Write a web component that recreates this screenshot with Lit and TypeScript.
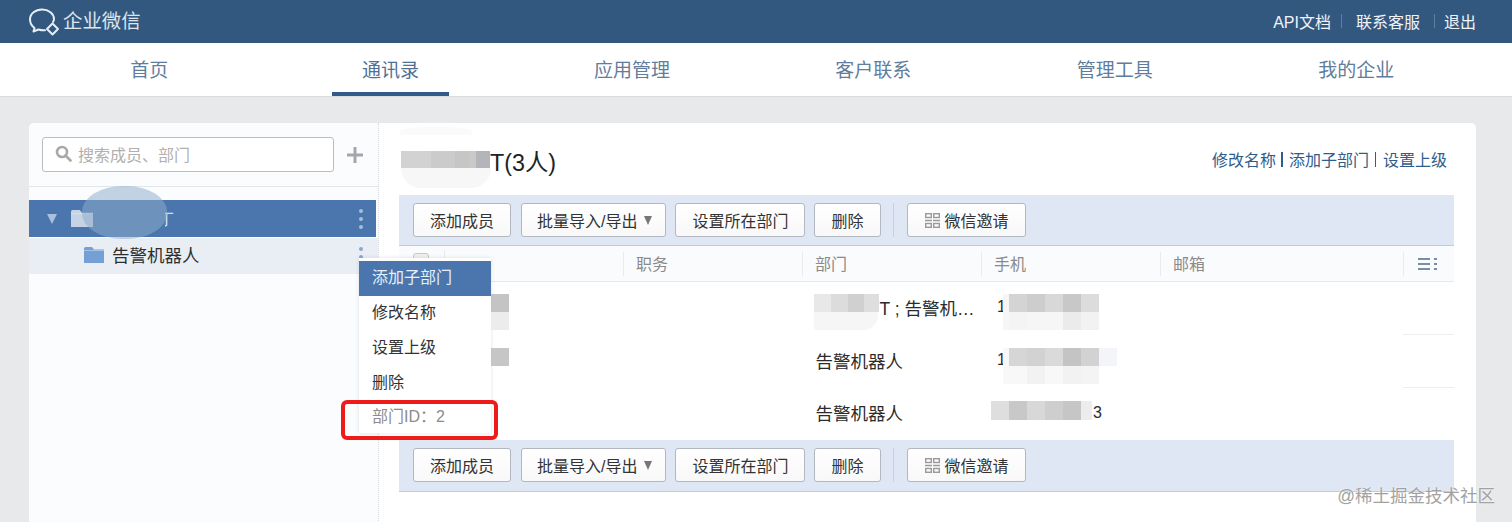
import { LitElement, html, css, svg } from "lit";
import { customElement } from "lit/decorators.js";

type Tile = [number, number, number, number, string, string?];

const NAV = ["首页", "通讯录", "应用管理", "客户联系", "管理工具", "我的企业"];
const COLS = ["职务", "部门", "手机", "邮箱"];
const MENU = ["添加子部门", "修改名称", "设置上级", "删除"];

// pixelated redactions, placed over the content they hide (page coordinates)
function strip(x: number, y: number, h: number, widths: number[], colours: string[]): Tile[] {
  const out: Tile[] = [];
  let cx = x;
  widths.forEach((w, i) => {
    out.push([cx, y, w, h, colours[i]]);
    cx += w;
  });
  return out;
}

const FIVE = [18, 18, 18, 18, 18];

const TILES: Tile[] = [
  [400, 127, 72, 8, "#fafafa", "50% 50% 0 0"],
  [401, 168, 90, 20, "#f7f7f7", "0 0 26px 26px"],
  ...strip(401, 151, 17, [30, 24, 14, 7, 14], ["#d2d2d2", "#cbcbcb", "#c6c6c6", "#c9c9c7", "#b4b5ba"]),
  [491, 294, 18, 18, "#c4c4c4"],
  [491, 312, 18, 18, "#ececec"],
  [491, 348, 18, 18, "#c6c6c6"],
  [814, 312, 64, 18, "#f6f6f6", "0 0 14px 0"],
  ...strip(814, 294, 18, [17, 17, 16, 15], ["#e8e8e8", "#dcdcdc", "#d0d0d0", "#dedede"]),
  [1003, 294, 6, 36, "#f6f6f6"],
  ...strip(1009, 294, 18, FIVE, ["#d4d4d4", "#cdcdcd", "#d8d8d8", "#c8c8c8", "#dcdcdc"]),
  ...strip(1009, 312, 18, FIVE, ["#f4f4f4", "#f6f6f6", "#f6f6f6", "#ebebeb", "#f2f2f2"]),
  [1003, 348, 6, 36, "#f8f8f8"],
  ...strip(1009, 348, 18, [...FIVE, 18], ["#d6d6d6", "#d2d2d2", "#dadada", "#c4c4c4", "#d2d2d2", "#f4f5f8"]),
  ...strip(1009, 366, 18, FIVE, ["#f8f8f8", "#f2f2f2", "#f8f8f8", "#f2f2f2", "#f4f4f4"]),
  ...strip(991, 401, 19, [18, 18, 18, 18, 18, 11], ["#dedede", "#c8c8c8", "#d8d8d8", "#cecece", "#c6c6c6", "#ececec"]),
];

@customElement("tb-bar")
class TbBar extends LitElement {
  static styles = css`
    :host {
      display: flex;
      align-items: center;
      height: 51px;
      box-sizing: border-box;
      padding: 0 14px;
      background: #dfe7f4;
      border-bottom: 1px solid #c3cbd8;
      gap: 9px;
    }
    .btn {
      height: 34px;
      box-sizing: border-box;
      padding: 0 16px;
      display: flex;
      align-items: center;
      font-size: 16px;
      color: #333;
      background: linear-gradient(#ffffff, #f8f8f8);
      border: 1px solid #b3b8c0;
      border-radius: 3px;
      white-space: nowrap;
    }
    .btn span {
      display: block;
      margin-top: -1px;
    }
    .batch {
      padding: 0 13px 0 15px;
      margin-left: 1px;
    }
    .caret {
      margin-left: 7px;
      width: 0;
      height: 0;
      border-left: 4px solid transparent;
      border-right: 4px solid transparent;
      border-top: 9px solid #777;
    }
    .sep {
      width: 1px;
      height: 34px;
      background: #c6d0de;
      margin: 0 4px 0 3px;
    }
    .qr {
      margin-right: 5px;
      display: block;
    }
    .invite {
      padding-left: 17px;
    }
  `;
  render() {
    return html`
      <div class="btn"><span>添加成员</span></div>
      <div class="btn batch"><span>批量导入/导出</span><i class="caret"></i></div>
      <div class="btn"><span>设置所在部门</span></div>
      <div class="btn"><span>删除</span></div>
      <div class="sep"></div>
      <div class="btn invite">
        <svg class="qr" width="15" height="15" viewBox="0 0 15 15" fill="none" stroke="#9a9a9a" stroke-width="1.4">
          <rect x="0.7" y="0.7" width="5.6" height="3.8"></rect>
          <rect x="8.700" y="0.7" width="5.6" height="3.8"></rect>
          <path d="M0 7.500 H7 M8 7.500 H15"></path>
          <rect x="0.7" y="10.500" width="5.6" height="3.8"></rect>
          <rect x="8.700" y="10.500" width="5.6" height="3.8"></rect>
        </svg>
        <span>微信邀请</span>
      </div>
    `;
  }
}

const folder = (w: number, h: number, fill: string) => svg`
  <svg width=${w} height=${h} viewBox="0 0 20 16" preserveAspectRatio="none" style="display:block">
    <path d="M0 1.500 Q0 0 1.500 0 H8 L10 2.500 H20 V16 H0 Z" fill=${fill}></path>
    <path d="M0 3.500 H20" stroke="#ffffff" stroke-opacity=".35" stroke-width="1"></path>
  </svg>`;

@customElement("app-root")
class AppRoot extends LitElement {
  static styles = css`
    :host {
      display: block;
      position: relative;
      height: 522px;
      overflow: hidden;
      background: #e8e9eb;
      font-family: "Liberation Sans", "Noto Sans CJK SC", sans-serif;
      color: #222;
    }
    .top {
      height: 43px;
      background: #33587f;
      display: flex;
      align-items: center;
      justify-content: space-between;
      padding: 0 36px 0 29px;
      color: #f0f4f8;
      box-sizing: border-box;
    }
    .logo {
      display: flex;
      align-items: center;
      gap: 3px;
      font-size: 19.400px;
      color: #dde5ee;
    }
    .logo svg {
      display: block;
    }
    .logo span {
      margin-top: -4px;
    }
    .toplinks {
      display: flex;
      align-items: center;
      font-size: 16px;
      margin-top: -1px;
    }
    .toplinks i {
      width: 1px;
      height: 14px;
      background: #5f7f9f;
    }
    .toplinks i.a {
      margin: 0 14px 0 10px;
    }
    .toplinks i.b {
      margin: 0 9px 0 14px;
    }
    .nav {
      height: 54px;
      box-sizing: border-box;
      background: #fff;
      border-bottom: 1px solid #dcdcdc;
      display: grid;
      grid-template-columns: repeat(6, 241.4px);
      padding-left: 28.500px;
    }
    .nav div {
      display: flex;
      justify-content: center;
    }
    .nav span {
      display: block;
      padding: 0 30px;
      height: 53px;
      box-sizing: border-box;
      line-height: 56px;
      font-size: 19px;
      color: #5f7d9c;
    }
    .nav span.on {
      color: #4f7196;
      border-bottom: 4px solid #2f5a8a;
    }
    .card {
      position: relative;
      margin: 26px 36px 0 29px;
      height: 420px;
      background: #fff;
      border-radius: 5px 5px 0 0;
      display: flex;
    }
    .side {
      width: 349px;
      flex: none;
      background: #fbfcfe;
      border-right: 1px dotted #d8dadd;
      border-radius: 5px 0 0 0;
    }
    .searchbar {
      height: 64px;
      box-sizing: border-box;
      border-bottom: 1px solid #e3e5e8;
      display: flex;
      align-items: center;
      padding: 0 13px;
      gap: 12px;
    }
    .search {
      width: 292px;
      height: 35px;
      box-sizing: border-box;
      background: #fff;
      border: 1px solid #b9bdc4;
      border-radius: 3px;
      display: flex;
      align-items: center;
      padding: 0 0 2px 12px;
      gap: 6px;
      font-size: 16px;
      color: #b0b0b0;
    }
    .search svg,
    .plus {
      display: block;
    }
    .tree {
      padding-top: 13px;
      padding-right: 2px;
    }
    .row {
      display: flex;
      align-items: center;
      height: 37px;
      position: relative;
    }
    .row.sel {
      background: #4a76ad;
      margin-bottom: 1px;
      padding-left: 18px;
      gap: 14px;
    }
    .row.sub {
      height: 36px;
      box-sizing: border-box;
      background: #e9eef5;
      padding: 0 0 3px 55px;
      gap: 8px;
      font-size: 17.500px;
      color: #2e2e2e;
      margin-right: -2px;
    }
    .sub span.name {
      margin-top: -1px;
    }
    .tri {
      width: 0;
      height: 0;
      border-left: 5px solid transparent;
      border-right: 5px solid transparent;
      border-top: 10px solid #a9c1dd;
    }
    .dots {
      position: absolute;
      right: 13px;
      top: 9px;
      display: grid;
      gap: 4px;
    }
    .sub .dots {
      right: 15px;
    }
    .dots b {
      display: block;
      width: 4px;
      height: 4px;
      border-radius: 50%;
      background: #a5bddb;
    }
    .sub .dots b {
      background: #8aa8cc;
    }
    .frag {
      position: absolute;
      left: 129px;
      top: 6px;
      color: #d5e0ec;
      font-size: 16px;
      clip-path: inset(0 0 0 7px);
    }
    .main {
      flex: 1;
      min-width: 0;
      padding: 0 22px 0 20px;
    }
    .head {
      height: 72px;
      display: flex;
      align-items: center;
      justify-content: space-between;
      padding-left: 91px;
      padding-right: 7px;
    }
    .title {
      font-size: 23.300px;
      color: #222;
      padding-top: 3px;
    }
    .links {
      font-size: 16px;
      color: #2f5d8c;
      display: flex;
      align-items: center;
      margin-top: 0;
    }
    .links i {
      width: 2px;
      height: 15px;
      background: #2f5d8c;
      margin: 0 5.500px;
    }
    .links i.thin {
      width: 1px;
      margin: 0 6.500px;
    }
    .thead,
    .tr {
      display: grid;
      grid-template-columns: 224px 179px 179px 179px 243px 51px;
    }
    .thead {
      height: 36px;
      box-sizing: border-box;
      background: #fafbfd;
      border-bottom: 1px solid #e6e9ee;
      font-size: 16px;
      color: #8a8a8a;
      align-items: center;
    }
    .th {
      height: 24px;
      line-height: 26px;
      padding-left: 12px;
      box-sizing: border-box;
      border-left: 1px solid #e9ebef;
      white-space: nowrap;
    }
    .th.first {
      border-left: none;
      padding-left: 14px;
      display: flex;
      align-items: flex-start;
      margin-top: -3px;
      height: 24px;
    }
    .check {
      width: 16px;
      height: 16px;
      box-sizing: border-box;
      border: 1px solid #c8c8c8;
      border-radius: 3px;
      background: #f0f0f0;
      margin-top: 3px;
    }
    .vline {
      width: 1px;
      height: 24px;
      background: #e9ebef;
      margin-left: 15px;
    }
    .th.tool {
      padding-left: 14px;
      display: flex;
      align-items: center;
    }
    .tr {
      height: 53px;
      font-size: 17.500px;
      color: #2b2b2b;
      align-items: center;
      white-space: nowrap;
    }
    .tr.last {
      height: 52px;
    }
    .td {
      min-width: 0;
      margin-top: -3px;
    }
    .td.dept {
      padding-left: 13.500px;
    }
    .td.phone {
      padding-left: 16px;
      font-size: 16px;
    }
    .td.end {
      align-self: stretch;
      box-sizing: border-box;
      margin-top: 0;
    }
    .td.end.line {
      border-bottom: 1px solid #eceef1;
    }
    tb-bar.bottom {
      height: 52px;
      padding-bottom: 1px;
    }
    .mask {
      position: absolute;
    }
    .blob {
      position: absolute;
      left: 82px;
      top: 186px;
      width: 85px;
      height: 53px;
      border-radius: 48%;
      background: rgba(141, 171, 202, 0.525);
    }
    .menu {
      position: absolute;
      left: 330px;
      top: 135px;
      width: 132px;
      background: #fff;
      padding-top: 3px;
      box-shadow: 0 0 4px rgba(0, 0, 0, 0.12);
      font-size: 16px;
      color: #333;
    }
    .menu div {
      height: 35px;
      line-height: 34px;
      padding-left: 13px;
    }
    .menu .on {
      background: #4a76ad;
      color: #e8eff7;
    }
    .menu .muted {
      color: #8c8c8c;
      height: 32px;
      line-height: 32px;
    }
    .red {
      position: absolute;
      left: 341px;
      top: 400px;
      width: 157px;
      height: 40px;
      box-sizing: border-box;
      border: 4px solid #ee1b1b;
      border-radius: 6px;
    }
    .mark {
      position: absolute;
      right: 17px;
      bottom: 15px;
      font-size: 17.500px;
      color: #a2a2a2;
      text-shadow: 0 0 2px #fff;
      white-space: nowrap;
    }
  `;

  render() {
    return html`
      <div class="top">
        <div class="logo">
          <svg width="31" height="28" viewBox="0 0 31 28" fill="none" stroke="#e6edf4" stroke-width="2" stroke-linecap="round" stroke-linejoin="round">
            <path d="M24 14 C25 12.500 25 12 25 11 C25 5.500 19.500 1.500 13 1.500 C6.500 1.500 1 5.500 1 11.500 C1 15 3 18 5.500 20 L4.500 23.500 L9.500 21.500 C11.500 22.200 14 22.500 16 22.300"></path>
            <path d="M23.500 15.500 L29 21 L23.500 26.500 L18 21 Z"></path>
          </svg>
          <span>企业微信</span>
        </div>
        <div class="toplinks">
          <span>API文档</span><i class="a"></i><span>联系客服</span><i class="b"></i><span>退出</span>
        </div>
      </div>
      <div class="nav">
        ${NAV.map((n, i) => html`<div><span class=${i === 1 ? "on" : ""}>${n}</span></div>`)}
      </div>
      <div class="card">
        <div class="side">
          <div class="searchbar">
            <div class="search">
              <svg width="17" height="17" viewBox="0 0 17 17" fill="none" stroke="#a8a8a8" stroke-width="2.600">
                <circle cx="7" cy="7" r="5"></circle>
                <path d="M10.500 10.500 L15.500 15.500" stroke-linecap="round"></path>
              </svg>
              <span>搜索成员、部门</span>
            </div>
            <svg class="plus" width="18" height="18" viewBox="0 0 18 18" stroke="#a3a6ab" stroke-width="3">
              <path d="M9 1 V17 M1 9 H17"></path>
            </svg>
          </div>
          <div class="tree">
            <div class="row sel">
              <span class="tri"></span>
              ${folder(22, 17, "#c5d3e4")}
              <span class="frag">丁</span>
              <span class="dots"><b></b><b></b><b></b></span>
            </div>
            <div class="row sub">
              ${folder(20, 16, "#75a0d5")}
              <span class="name">告警机器人</span>
              <span class="dots"><b></b><b></b><b></b></span>
            </div>
          </div>
        </div>
        <div class="main">
          <div class="head">
            <div class="title">T(3人)</div>
            <div class="links">
              <span>修改名称</span><i></i><span>添加子部门</span><i class="thin"></i><span>设置上级</span>
            </div>
          </div>
          <tb-bar></tb-bar>
          <div class="thead">
            <div class="th first"><span class="check"></span><span class="vline"></span></div>
            ${COLS.map((c) => html`<div class="th">${c}</div>`)}
            <div class="th tool">
              <svg width="19" height="14" viewBox="0 0 19 14" stroke="#7b8da3" stroke-width="1.800">
                <path d="M0 2 H12 M0 7 H12 M0 12 H12 M16 2 H19 M16 7 H19 M16 12 H19"></path>
              </svg>
            </div>
          </div>
          <div class="tr">
            <div class="td"></div><div class="td"></div>
            <div class="td dept"><span style="margin-left:64px">T ; 告警机…</span></div>
            <div class="td phone">1</div><div class="td"></div>
            <div class="td end line"></div>
          </div>
          <div class="tr">
            <div class="td"></div><div class="td"></div>
            <div class="td dept">告警机器人</div>
            <div class="td phone">1</div><div class="td"></div>
            <div class="td end line"></div>
          </div>
          <div class="tr last">
            <div class="td"></div><div class="td"></div>
            <div class="td dept">告警机器人</div>
            <div class="td phone"><span style="margin-left:96px">3</span></div><div class="td"></div>
            <div class="td end"></div>
          </div>
          <tb-bar class="bottom"></tb-bar>
        </div>
        <div class="menu">
          ${MENU.map((m, i) => html`<div class=${i === 0 ? "on" : ""}>${m}</div>`)}
          <div class="muted">部门ID：2</div>
        </div>
      </div>
      <div class="blob"></div>
      ${TILES.map(
        (t) => html`<div
          class="mask"
          style="left:${t[0]}px;top:${t[1]}px;width:${t[2]}px;height:${t[3]}px;background:${t[4]};border-radius:${t[5] ?? 0}"
        ></div>`,
      )}
      <div class="red"></div>
      <div class="mark">@稀土掘金技术社区</div>
    `;
  }
}

declare global {
  interface HTMLElementTagNameMap {
    "tb-bar": TbBar;
    "app-root": AppRoot;
  }
}
